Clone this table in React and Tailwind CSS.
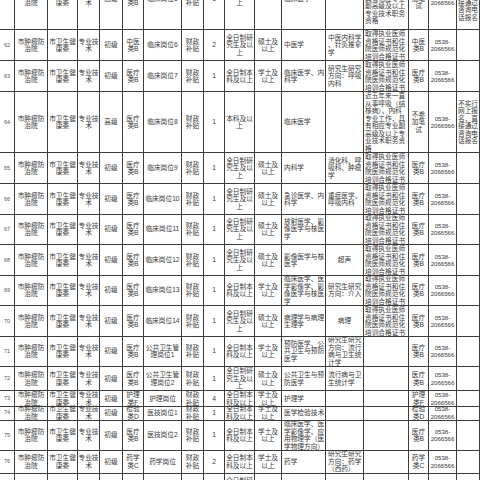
import React from 'react';

const GRID = 'grid grid-cols-[15px_33px_30px_22px_23px_21px_38px_22px_21px_30px_27px_44px_38px_45px_20px_28px_23px]';

const UNIT = '市肿瘤防\n治院';
const DEPT = '市卫生健\n康委';
const TECH = '专业技\n术';
const FUND = '财政\n补贴';
const PHONE = '0538-\n2066566';
const QUAL = '取得执业医师\n资格证书和住\n院医师规范化\n培训合格证书';
const YJS = '全日制研\n究生及以\n上';
const BK = '全日制本\n科及以上';
const SS = '硕士及\n以上';
const XS = '学士及\n以上';
const YLB = '医疗\n类B';
const NOTE = '不实行\n网上报\n名，直\n接通过\n咨询电\n话报名';
const EXEMPT = '不参\n加笔\n试';

// left aligned columns: 专业, 其他条件, 执业资格
const ALIGN = {
    11: 'justify-start text-left pl-[2px]',
    12: 'justify-start text-left pl-[2px]',
    13: 'justify-start text-left pl-[1px]',
};

const row = (h, n, level, cat, post, num, edu, deg, major, other, qual, exam, note = '') => ({
    h,
    cells: [n, UNIT, DEPT, TECH, level, cat, post, FUND, num, edu, deg, major, other, qual, exam, PHONE, note],
});

const rows = [
    row('h-[62px]', '61', '高级', YLB, '临床岗位5', '1', '本科及以\n上', '', '临床医学', '',
        '近五年来一直\n从事肿瘤内科\n专业工作，\n具有相应专业\n副高级及以上\n专业技术职务\n资格', EXEMPT, NOTE),
    row('h-[31px]', '62', '初级', '中医\n类B', '临床岗位6', '2', YJS, SS, '中医学', '中医内科学\n、针灸推拿\n学', QUAL, '中医\n类B'),
    row('h-[31px]', '63', '初级', YLB, '临床岗位7', '1', BK, XS, '临床医学、内\n科学', '研究生研究\n方向：呼吸\n内科', QUAL, YLB),
    row('h-[61px]', '64', '高级', YLB, '临床岗位8', '1', '本科及以\n上', '', '临床医学', '',
        '近五年来一直\n从事呼吸（结\n核病）、内科\n专业工作，具\n有相应专业副\n高级及以上专\n业技术职务资\n格', EXEMPT, NOTE),
    row('h-[31px]', '65', '初级', YLB, '临床岗位9', '1', YJS, SS, '内科学', '消化科、呼\n吸科、肿瘤\n学', QUAL, YLB),
    row('h-[30px]', '66', '初级', YLB, '临床岗位10', '1', YJS, SS, '急诊医学、内\n科学', '重症医学、\n呼吸内科', QUAL, YLB),
    row('h-[31px]', '67', '初级', YLB, '临床岗位11', '1', YJS, SS, '放射医学、影\n像医学与核医\n学', '', QUAL, YLB),
    row('h-[30px]', '68', '初级', YLB, '临床岗位12', '1', YJS, SS, '影像医学与核\n医学', { t: '超声' }, QUAL, YLB),
    row('h-[31px]', '69', '初级', YLB, '临床岗位13', '1', BK, XS, '临床医学、医\n学影像学、影\n像医学与核医\n学', '研究生研究\n方向：介入', QUAL, YLB),
    row('h-[30px]', '70', '初级', YLB, '临床岗位14', '1', YJS, SS, '病理学与病理\n生理学', { t: '病理' }, QUAL, YLB),
    row('h-[31px]', '71', '初级', YLB, '公共卫生管\n理岗位1', '1', BK, XS, '预防医学、公\n共卫生与预防\n医学', '研究生研究\n方向：流行\n病与卫生统\n计学', '', YLB),
    row('h-[24px]', '72', '初级', YLB, '公共卫生管\n理岗位2', '1', YJS, SS, '公共卫生与预\n防医学', '流行病与卫\n生统计学', '', YLB),
    row('h-[14px]', '73', '初级', '护理\n类F', '护理岗位', '4', BK, XS, '护理学', '', '', '护理\n类F'),
    row('h-[15px]', '74', '初级', '检验\n类D', '医技岗位1', '1', BK, XS, '医学检验技术', '', '', '检验\n类D'),
    row('h-[30px]', '75', '初级', YLB, '医技岗位2', '1', BK, XS, '临床医学、医\n学影像学、应\n用物理学（医\n学物理方向）', '', '', YLB),
    row('h-[24px]', '76', '初级', '药学\n类C', '药学岗位', '2', BK, XS, '药学', '研究生研究\n方向：药学\n（西药）', '', '药学\n类C'),
    row('h-[30px]', '77', '初级', '药学\n类C', '药学岗位2', '1', YJS, SS, '药学', '', '', '药学\n类C'),
];

const Cell = ({ value, idx }) => {
    const centered = typeof value === 'object';
    const text = centered ? value.t : value;
    let align = 'justify-center text-center';
    if (!centered && ALIGN[idx]) align = ALIGN[idx];
    let size = 'text-[6.7px] leading-[7.5px]';
    if (idx === 0) size = 'text-[5.6px] leading-[7px] text-[#555]';
    if (idx === 15) size = 'text-[6.1px] leading-[7.5px]';
    return (
        <div className={`flex items-center ${align} ${size} whitespace-pre border-r border-b border-[#3c3c3c] min-w-0`}>
            {text}
        </div>
    );
};

export default function App() {
    return (
        <div className="w-[480px] h-[480px] overflow-hidden bg-white text-[#383838] font-['Liberation_Sans','Noto_Sans_CJK_SC',sans-serif]">
            <div className="-mt-[32px]">
                {rows.map((r, i) => (
                    <div key={i} className={`${GRID} ${r.h}`}>
                        {r.cells.map((c, j) => (
                            <Cell key={j} value={c} idx={j} />
                        ))}
                    </div>
                ))}
            </div>
        </div>
    );
}
